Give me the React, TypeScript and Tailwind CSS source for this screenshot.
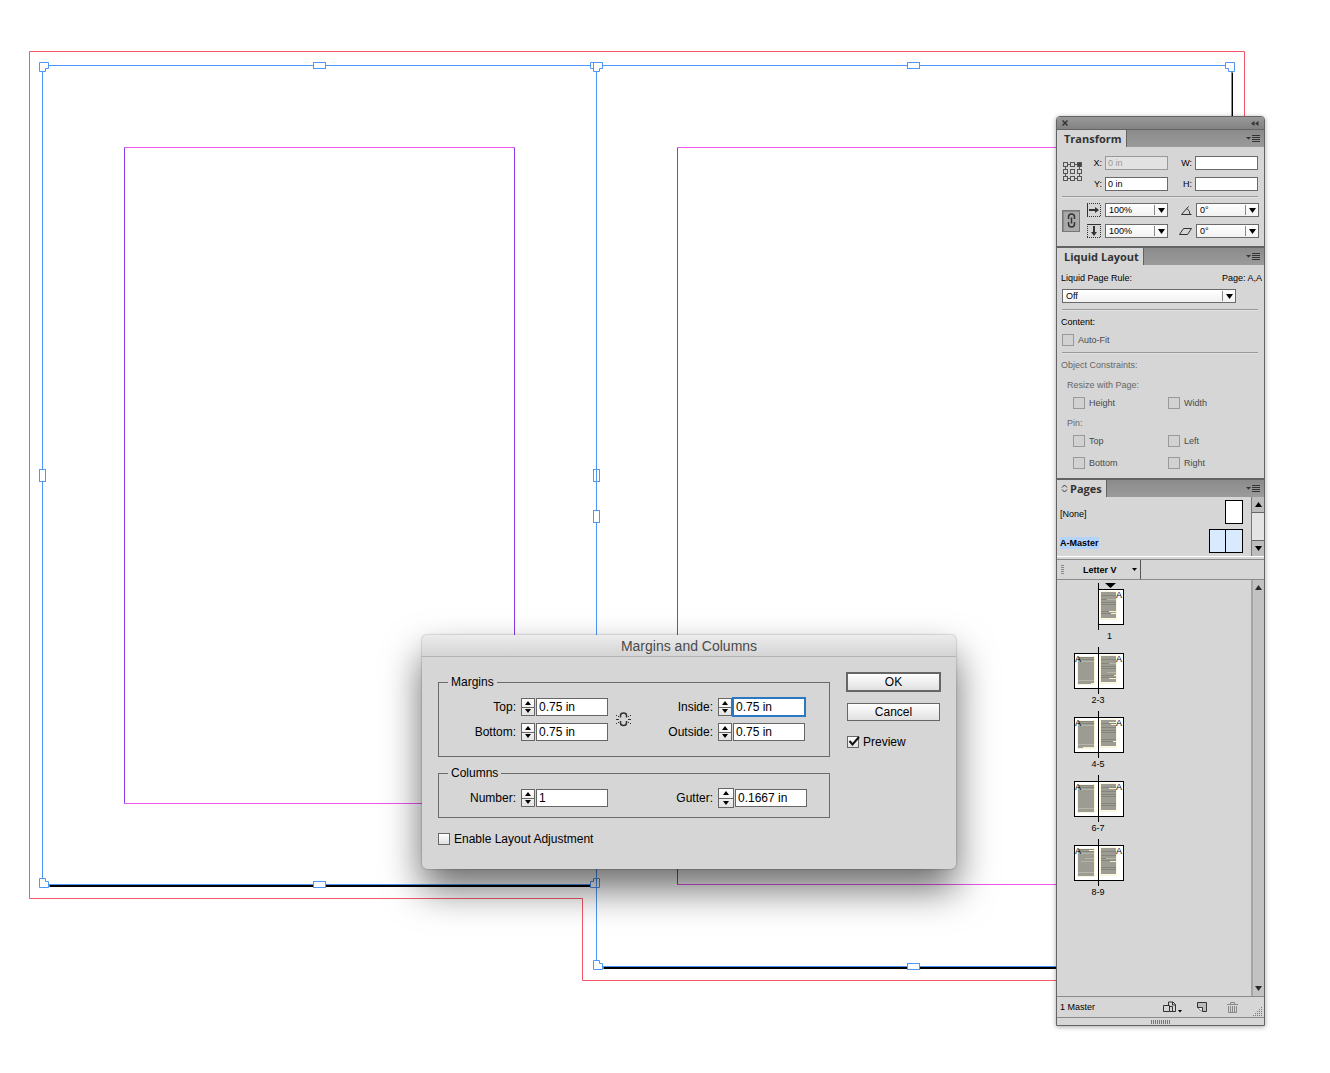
import { useState } from "react";
import type { ReactNode } from "react";

type Handle = { x: number; y: number };

const wideHandles: Handle[] = [
  { x: 313, y: 62 },
  { x: 907, y: 62 },
  { x: 313, y: 881 },
  { x: 907, y: 963 },
];

const tallHandles: Handle[] = [
  { x: 39, y: 469 },
  { x: 593, y: 469 },
  { x: 593, y: 510 },
];

// Master spread with bleed, page edges, margins and handles
function Spread() {
  return (
    <svg className="absolute left-0 top-0" width="1330" height="1073" fill="none" aria-hidden="true">
      <g transform="translate(.5 .5)">
        <path d="M29 51H1244V980H582V898H29Z" stroke="#f4596a" />

        {/* Page shadow */}
        <path d="M49 885H590M49 886H590M603 967H1232M603 968H1232M1232 72V968" stroke="#000" />

        {/* Page edges */}
        <path d="M42 65H1231V966H596M42 65V884H596M596 65V966" stroke="#4d97f8" />

        {/* Margins */}
        <path d="M124 147H514M124 803H514M677 147H1150M677 884H1150" stroke="#ec55ee" />
        <path d="M124 147V803M514 147V803M677 147V884" stroke="#8a38ea" />

        {/* Handles */}
        <g stroke="#4d97f8" fill="#fff">
          {wideHandles.map((h) => (
            <rect key={`${h.x}-${h.y}`} x={h.x} y={h.y} width="12" height="6" />
          ))}
          {tallHandles.map((h) => (
            <rect key={`${h.x}-${h.y}`} x={h.x} y={h.y} width="6" height="12" />
          ))}
          <path d="M596 469V481" />
          <path d="M39 62H48V68H45V71H39Z" />
          <path d="M590 62H602V68H590Z" />
          <path d="M593 62H602V68H599V71H593Z" />
          <path d="M1225 62H1234V71H1228V68H1225Z" />
          <path d="M39 878H45V881H48V887H39Z" />
          <path d="M593 878H599V887H590V881H593Z" />
          <path d="M596 878V887" />
          <path d="M593 960H599V963H602V969H593Z" />
        </g>
      </g>
    </svg>
  );
}

/* ---------- Dialog ---------- */

type FieldProps = {
  id: string;
  label: string;
  initial: string;
  labelClass: string;
  focused?: boolean;
  large?: boolean;
};

function StepperField({ id, label, initial, labelClass, focused, large }: FieldProps) {
  const [value, setValue] = useState(initial);

  const step = (dir: number) => {
    const next = Math.max(0, parseFloat(value) + dir * (initial.includes("in") ? 0.0625 : 1));
    setValue(initial.includes("in") ? `${next} in` : `${next}`);
  };

  return (
    <div className="flex items-center">
      <label htmlFor={id} className={`text-right ${labelClass}`}>
        {label}
      </label>
      <div
        className={`ml-[5px] mr-px flex flex-col border border-[#666] bg-linear-to-b from-white to-[#e4e4e4] ${
          large ? "h-5 w-4" : "h-[18px] w-[14px]"
        }`}
      >
        <button
          type="button"
          aria-label={`Increase ${label}`}
          onClick={() => step(1)}
          className="flex flex-1 items-center justify-center border-b border-[#666]"
        >
          <svg width="6" height="4"><path d="M0 4L3 0L6 4Z" /></svg>
        </button>
        <button
          type="button"
          aria-label={`Decrease ${label}`}
          onClick={() => step(-1)}
          className="flex flex-1 items-center justify-center"
        >
          <svg width="6" height="4"><path d="M0 0H6L3 4Z" /></svg>
        </button>
      </div>
      <input
        id={id}
        value={value}
        onChange={(e) => setValue(e.target.value)}
        className={`h-[18px] w-[72px] border bg-white px-[2px] outline-none ${
          focused ? "border-[#2a78c4] ring-1 ring-[#2a78c4]" : "border-[#666]"
        }`}
      />
    </div>
  );
}

function BrokenLink() {
  return (
    <svg width="15" height="15" fill="none" stroke="#333">
      <path d="M4.500 5.500V3.500Q4.500 1 7.500 1T10.500 3.500V5.500M4.500 9V11Q4.500 13.500 7.500 13.500T10.500 11V9" strokeWidth="1.500" />
      <path d="M0 7.500H3M12 7.500H15M0 3.500H1M2 4.500H3M14 3.500H15M12 4.500H13M0 11.500H1M2 10.500H3M14 11.500H15M12 10.500H13" />
    </svg>
  );
}

function MarginsDialog() {
  const [preview, setPreview] = useState(true);

  return (
    <section
      role="dialog"
      aria-labelledby="dialog-title"
      className="absolute left-[422px] top-[635px] w-[534px] rounded-[5px] bg-[#d6d6d6] text-[12px] leading-4 text-black shadow-[0_20px_38px_rgba(0,0,0,0.58),0_0_2px_rgba(0,0,0,0.4)]"
    >
      <h1
        id="dialog-title"
        className="h-[22px] rounded-t-[5px] border-b border-[#b2b2b2] bg-linear-to-b from-[#ececec] to-[#d4d4d4] text-center text-[14px] leading-[22px] text-[#4a4a4a]"
      >
        Margins and Columns
      </h1>

      <form className="flex gap-4 pl-4" onSubmit={(e) => e.preventDefault()}>
        <div className="w-[392px] pb-[22px] pt-[18px]">
          <fieldset className="border border-[#6a6a6a] pb-[15px] pt-[8px]">
            <legend className="ml-[9px] px-[3px] leading-[15px]">Margins</legend>
            <div className="flex items-center">
              <div className="flex flex-col gap-[7px]">
                <StepperField id="top" label="Top:" initial="0.75 in" labelClass="w-[77px]" />
                <StepperField id="bottom" label="Bottom:" initial="0.75 in" labelClass="w-[77px]" />
              </div>
              <button type="button" aria-label="Make all settings the same" className="ml-2 w-[15px]">
                <BrokenLink />
              </button>
              <div className="flex flex-col gap-[7px]">
                <StepperField id="inside" label="Inside:" initial="0.75 in" labelClass="w-[82px]" focused />
                <StepperField id="outside" label="Outside:" initial="0.75 in" labelClass="w-[82px]" />
              </div>
            </div>
          </fieldset>

          <fieldset className="mt-[9px] border border-[#6a6a6a] pb-[9px] pt-[7px]">
            <legend className="ml-[9px] px-[3px] leading-[15px]">Columns</legend>
            <div className="flex items-center">
              <StepperField id="number" label="Number:" initial="1" labelClass="w-[77px]" />
              <StepperField id="gutter" label="Gutter:" initial="0.1667 in" labelClass="w-[105px]" large />
            </div>
          </fieldset>

          <label className="mt-[13px] flex items-center gap-1">
            <input
              type="checkbox"
              className="size-3 appearance-none border border-[#666] bg-linear-to-b from-white to-[#e0e0e0] checked:bg-[#444]"
            />
            Enable Layout Adjustment
          </label>
        </div>

        <div className="flex flex-col items-start pt-[15px]">
          <button type="submit" className="h-5 w-[95px] border-2 border-[#666] bg-linear-to-b from-white to-[#e0e0e0]">
            OK
          </button>
          <button
            type="button"
            className="ml-px mt-[11px] h-[18px] w-[93px] border border-[#666] bg-linear-to-b from-white to-[#e0e0e0]"
          >
            Cancel
          </button>
          <label className="ml-px mt-[13px] flex items-center gap-1">
            <span className="relative flex">
              <input
                type="checkbox"
                checked={preview}
                onChange={(e) => setPreview(e.target.checked)}
                className="size-3 appearance-none border border-[#666] bg-linear-to-b from-white to-[#e0e0e0]"
              />
              {preview && (
                <svg className="pointer-events-none absolute left-0 top-0" width="13" height="12" fill="none" stroke="#111" strokeWidth="2">
                  <path d="M2.500 5L5.500 8.500L12 1" />
                </svg>
              )}
            </span>
            Preview
          </label>
        </div>
      </form>
    </section>
  );
}

/* ---------- Panels ---------- */

function TabBar({ title, icon }: { title: string; icon?: ReactNode }) {
  return (
    <div className="flex h-[18px] items-stretch justify-between border-t border-[#636363] bg-linear-to-b from-[#8b8b8b] to-[#9b9b9b]">
      <h2 className="flex items-center gap-[2px] border-r border-[#636363] bg-[#d6d6d6] pl-[7px] pr-1 font-['Open_Sans',sans-serif] text-[11px] font-bold leading-4 text-[#333] has-[svg]:pl-1">
        {icon}
        {title}
      </h2>
      <button type="button" aria-label={`${title} panel menu`} className="flex items-center pr-1">
        <svg width="14" height="9" fill="#333">
          <path d="M0 3H5L2.500 5.500ZM6 1H14V2H6ZM6 3H14V4H6ZM6 5H14V6H6ZM6 7H14V8H6Z" />
        </svg>
      </button>
    </div>
  );
}

function Divider() {
  return <hr className="ml-[5px] mr-[6px] h-[2px] border-b border-t border-b-[#e2e2e2] border-t-[#999]" />;
}

type TextFieldProps = { id: string; label: string; value?: string; disabled?: boolean; labelClass: string };

function TextField({ id, label, value = "", disabled, labelClass }: TextFieldProps) {
  return (
    <div className="flex items-center">
      <label htmlFor={id} className={`text-right ${labelClass}`}>{label}</label>
      <input
        id={id}
        defaultValue={value}
        disabled={disabled}
        className="h-[14px] w-[63px] border border-[#6a6a6a] bg-white px-[2px] outline-none disabled:border-[#999] disabled:bg-[#e2e2e2] disabled:text-[#999]"
      />
    </div>
  );
}

function DropDown({ label, options, className }: { label: string; options: string[]; className: string }) {
  return (
    <div className={`relative flex ${className}`}>
      <select
        aria-label={label}
        className="h-[14px] w-full appearance-none border border-[#6a6a6a] bg-linear-to-b from-white to-[#f2f2f2] pl-[3px] leading-3 outline-none"
      >
        {options.map((o) => (
          <option key={o}>{o}</option>
        ))}
      </select>
      <svg className="pointer-events-none absolute right-0 top-0" width="14" height="14">
        <path d="M.5 2V12" stroke="#888" />
        <path d="M4 5H11L7.500 10Z" />
      </svg>
    </div>
  );
}

const scaleOptions = ["100%", "50%", "200%"];
const angleOptions = ["0°", "90°", "180°"];

function TransformPanel() {
  return (
    <section>
      <TabBar title="Transform" />
      <div className="pb-[8px] pt-[9px]">
        <div className="flex items-start pl-[6px]">
          <svg className="mt-[6px]" width="19" height="20" fill="#d6d6d6" stroke="#555" aria-label="Reference point">
            <path d="M2.500 2.500H16.500M2.500 16.500H16.500" />
            {[0, 7, 14].map((y) =>
              [0, 7, 14].map((x) => (
                <rect
                  key={`${x}-${y}`}
                  x={x + 0.5}
                  y={y + 0.5}
                  width="4"
                  height="4"
                  fill={x === 14 && y === 0 ? "#444" : "#d6d6d6"}
                />
              )),
            )}
            <path d="M2.500 5V7M2.500 12V14M16.500 5V7M16.500 12V14" />
          </svg>
          <div className="flex flex-col gap-[7px]">
            <TextField id="x" label="X:" value="0 in" disabled labelClass="w-[23px] pr-[3px]" />
            <TextField id="y" label="Y:" value="0 in" labelClass="w-[23px] pr-[3px]" />
          </div>
          <div className="ml-auto flex flex-col gap-[7px] pr-[6px]">
            <TextField id="w" label="W:" labelClass="w-6 pr-[3px]" />
            <TextField id="h" label="H:" labelClass="w-6 pr-[3px]" />
          </div>
        </div>

        <div className="mb-[5px] mt-[5px]"><Divider /></div>

        <div className="flex items-center pl-[5px] pr-[5px]">
          <button
            type="button"
            aria-label="Constrain proportions for scaling"
            className="flex h-[22px] w-[18px] items-center justify-center border border-[#777] bg-[#aaa] shadow-[inset_1px_1px_1px_#888]"
          >
            <svg width="9" height="15" fill="none" stroke="#333" strokeWidth="1.500">
              <path d="M1.500 6V4Q1.500 1 4.500 1T7.500 4V6M1.500 9V11Q1.500 14 4.500 14T7.500 11V9M4.500 4.500V10.500" />
            </svg>
          </button>
          <div className="ml-[7px] flex flex-col gap-[7px]">
            <div className="flex items-center gap-[4px]">
              <svg width="14" height="14" fill="none" stroke="#333">
                <path d="M.5 0V14" />
                <path d="M2 .5H14M2 13.500H14M13.500 2V14" strokeDasharray="1 1" />
                <path d="M2 7H9" strokeWidth="2" />
                <path d="M8 4L12 7L8 10Z" fill="#333" stroke="none" />
              </svg>
              <DropDown label="Scale X" options={scaleOptions} className="w-[63px]" />
            </div>
            <div className="flex items-center gap-[4px]">
              <svg width="14" height="14" fill="none" stroke="#333">
                <path d="M0 .5H14" />
                <path d="M.5 2V14M13.500 2V14M0 13.500H14" strokeDasharray="1 1" />
                <path d="M7 2V9" strokeWidth="2" />
                <path d="M4 8L7 12L10 8Z" fill="#333" stroke="none" />
              </svg>
              <DropDown label="Scale Y" options={scaleOptions} className="w-[63px]" />
            </div>
          </div>
          <div className="ml-auto flex flex-col gap-[7px]">
            <div className="flex items-center justify-end gap-[4px]">
              <svg width="11" height="9" fill="none" stroke="#333">
                <path d="M.5 8.500H10.500M.5 8.500L7.500 .5M6 2.500Q9 5 9 8.500" />
              </svg>
              <DropDown label="Rotation angle" options={angleOptions} className="w-[63px]" />
            </div>
            <div className="flex items-center justify-end gap-[4px]">
              <svg width="13" height="8" fill="none" stroke="#333">
                <path d="M.5 7.500L4.500 1.500H12.500L8.500 7.500Z" />
              </svg>
              <DropDown label="Shear angle" options={angleOptions} className="w-[63px]" />
            </div>
          </div>
        </div>
      </div>
    </section>
  );
}

function Check({ label }: { label: string }) {
  return (
    <label className="flex items-center gap-1 text-[#4a4a4a]">
      <input type="checkbox" disabled className="size-3 appearance-none border border-[#999] bg-[#d2d2d2]" />
      {label}
    </label>
  );
}

function LiquidLayoutPanel() {
  return (
    <section className="border-t border-[#636363]">
      <TabBar title="Liquid Layout" />
      <div className="pb-[9px] pt-[7px]">
        <div className="flex justify-between pl-1 pr-[2px]">
          <span>Liquid Page Rule:</span>
          <span>Page: A,A</span>
        </div>
        <div className="mb-[6px] mt-[5px] pl-[5px]">
          <DropDown label="Liquid Page Rule" options={["Off", "Scale", "Re-center", "Object-based"]} className="w-[174px]" />
        </div>
        <Divider />
        <p className="mt-[5px] pl-1">Content:</p>
        <div className="mb-[6px] mt-[6px] pl-[5px]">
          <Check label="Auto-Fit" />
        </div>
        <Divider />
        <p className="mt-[5px] pl-1 text-[#666]">Object Constraints:</p>
        <p className="mt-2 pl-[10px] text-[#666]">Resize with Page:</p>
        <div className="mt-[6px] grid grid-cols-[95px_1fr] pl-4">
          <Check label="Height" />
          <Check label="Width" />
        </div>
        <p className="mt-2 pl-[10px] text-[#666]">Pin:</p>
        <div className="mt-[6px] grid grid-cols-[95px_1fr] gap-y-[10px] pl-4">
          <Check label="Top" />
          <Check label="Left" />
          <Check label="Bottom" />
          <Check label="Right" />
        </div>
      </div>
    </section>
  );
}

type Stripe = [x: number, y: number, w: number, color: string];

const DARK = "#86867e";
const CREAM = "#f6f0d2";
const LIGHT = "#b5b5a8";

const leftBase: Stripe[] = [[4, 10, 16, DARK], [4, 12, 16, DARK], [4, 14, 16, LIGHT], [4, 33, 16, LIGHT]];
const rightBase: Stripe[] = [[27, 12, 15, DARK], [27, 16, 15, DARK], [27, 19, 15, DARK], [27, 21, 15, DARK], [27, 28, 15, DARK], [27, 30, 15, DARK]];

const spreads: { label: string; left: boolean; stripes: Stripe[] }[] = [
  { label: "1", left: false, stripes: [[33, 16, 9, LIGHT], [35, 28, 7, CREAM], [37, 30, 5, CREAM]] },
  { label: "2-3", left: true, stripes: [[35, 16, 7, LIGHT], [33, 25, 9, LIGHT], [40, 28, 2, CREAM], [35, 31, 7, CREAM], [17, 36, 3, CREAM]] },
  { label: "4-5", left: true, stripes: [[35, 11, 7, CREAM], [37, 13, 5, CREAM], [39, 30, 3, CREAM], [9, 36, 11, CREAM]] },
  { label: "6-7", left: true, stripes: [[35, 13, 7, CREAM]] },
  { label: "8-9", left: true, stripes: [[15, 11, 5, CREAM], [11, 19, 9, LIGHT], [7, 22, 13, LIGHT], [32, 19, 10, LIGHT], [36, 22, 6, CREAM]] },
];

function SpreadThumb({ label, left, stripes }: { label: string; left: boolean; stripes: Stripe[] }) {
  return (
    <li className="w-[50px]">
      <svg width="50" height="47" className="block">
        <rect x={left ? 0.5 : 24.5} y="6.500" width={left ? 49 : 25} height="35" fill="#fff" stroke="#000" />
        {left && (
          <>
            <rect x="3" y="9" width="18" height="29" fill="#fbf6e0" />
            <rect x="4" y="10" width="16" height="27" fill="#9c9c92" />
          </>
        )}
        <rect x="26" y="8" width="17" height="29" fill="#fbf6e0" />
        <rect x="27" y="9" width="15" height="26" fill="#9c9c92" />
        {[...(left ? leftBase : []), ...rightBase, ...stripes].map(([x, y, w, color]) => (
          <rect key={`${x}-${y}-${color}`} x={x} y={y} width={w} height="1" fill={color} />
        ))}
        <path d="M24.500 0V47" stroke="#000" />
        {!left && <path d="M31 0H42L36.500 5Z" />}
        {left && <text x="1" y="15" fontSize="9">A</text>}
        <text x="42" y="15" fontSize="9">A</text>
      </svg>
      <p className={left ? "pr-[2px] text-center" : "pl-[33px]"}>{label}</p>
    </li>
  );
}

function ScrollArrow({ up, label }: { up?: boolean; label: string }) {
  return (
    <button type="button" aria-label={label} className="flex h-[15px] items-center justify-center">
      <svg width="7" height="5">
        <path d={up ? "M0 5L3.500 0L7 5Z" : "M0 0H7L3.500 5Z"} />
      </svg>
    </button>
  );
}

function PagesPanel() {
  return (
    <section className="border-t border-[#636363]">
      <TabBar
        title="Pages"
        icon={
          <svg width="7" height="9" fill="none" stroke="#333">
            <path d="M1 3.500L3.500 1L6 3.500M1 5.500L3.500 8L6 5.500" />
          </svg>
        }
      />

      {/* Masters */}
      <div className="flex border-b border-white">
        <ul className="flex flex-1 flex-col gap-[5px] py-[3px] pl-[3px] pr-2">
          <li className="flex items-center justify-between">
            <span className="mt-1">[None]</span>
            <span className="h-6 w-[18px] border border-black bg-white" />
          </li>
          <li className="flex items-center justify-between font-bold">
            <span className="mt-1 bg-[#b3d3fb]">A-Master</span>
            <span className="flex h-6 w-[34px] border border-black bg-[#d9eaff]">
              <span className="w-4 border-r border-black" />
            </span>
          </li>
        </ul>
        <div className="flex w-[13px] flex-col justify-between border-l border-[#777] bg-[#bdbdbd]">
          <ScrollArrow up label="Scroll masters up" />
          <span className="flex-1 border-y border-[#666] bg-[#e4e4e4]" />
          <ScrollArrow label="Scroll masters down" />
        </div>
      </div>

      {/* Page size */}
      <div className="mt-[2px] flex h-[21px] items-stretch border-y border-[#8a8a8a]">
        <svg className="ml-1 self-center" width="3" height="9" fill="#888">
          <path d="M0 0H3V1H0ZM0 2H3V3H0ZM0 4H3V5H0ZM0 6H3V7H0ZM0 8H3V9H0Z" />
        </svg>
        <button type="button" className="flex w-[77px] items-center justify-between border-r border-[#555] pl-[19px] pr-[3px] font-bold">
          Letter V
          <svg width="5" height="3"><path d="M0 0H5L2.500 3Z" /></svg>
        </button>
      </div>

      {/* Document pages */}
      <div className="flex h-[416px]">
        <ul className="flex flex-1 flex-col gap-[5px] overflow-hidden pl-[17px] pt-[3px]">
          {spreads.map((s) => (
            <SpreadThumb key={s.label} {...s} />
          ))}
        </ul>
        <div className="flex w-[13px] flex-col justify-between border-l-2 border-[#999] bg-[#bebebe] opacity-80">
          <ScrollArrow up label="Scroll pages up" />
          <ScrollArrow label="Scroll pages down" />
        </div>
      </div>

      <footer className="flex h-[22px] items-center border-y border-[#8a8a8a] pl-[3px]">
        <span className="mr-auto">1 Master</span>
        <button type="button" aria-label="Edit page size">
          <svg width="19" height="13" fill="none" stroke="#333">
            <path d="M.5 4.500H6.500V10.500H.5ZM6.500 10.500H12.500V3.500L10 1H5.500V4.500M9.500 1V4H12.500M6.500 5.500H9.500V10.500" />
            <path d="M15 9H19L17 11.500Z" fill="#000" stroke="none" />
          </svg>
        </button>
        <button type="button" aria-label="Create new page" className="ml-[15px]">
          <svg width="11" height="11" fill="none" stroke="#333">
            <path d="M.5 5.500V.5H9.500V9.500H5.500Z" fill="#bbb" />
            <path d="M.5 5.500H5.500V9.500" fill="#eee" />
          </svg>
        </button>
        <button type="button" aria-label="Delete selected pages" className="ml-[19px]">
          <svg width="11" height="11" fill="none" stroke="#888">
            <path d="M0 2.500H11M3.500 2V.5H7.500V2M1.500 4V10.500H9.500V4M3.500 4V10M5.500 4V10M7.500 4V10" />
          </svg>
        </button>
        <svg className="ml-[15px] mr-[2px] mt-2" width="9" height="9" fill="none" stroke="#777">
          <path d="M8 .5H9M6 2.500H9M4 4.500H9M2 6.500H9M0 8.500H9" strokeDasharray="1 1" />
        </svg>
      </footer>
      <div className="flex h-[7px] items-center justify-center">
        <svg width="19" height="4" fill="none" stroke="#777">
          <path d="M0 2H19" strokeWidth="4" strokeDasharray="1 1" />
        </svg>
      </div>
    </section>
  );
}

function PanelDock() {
  return (
    <aside className="absolute right-[65px] top-[116px] w-[209px] rounded-t-[4px] border border-[#636363] bg-[#d6d6d6] text-[9px] leading-3 text-black shadow-[0_1px_5px_rgba(0,0,0,0.35)]">
      <header className="flex h-3 items-center justify-between rounded-t-[3px] bg-linear-to-b from-[#999] to-[#828282] px-[5px]">
        <button type="button" aria-label="Close panels">
          <svg width="6" height="6" stroke="#333" strokeWidth="1.500"><path d="M.5 .5L5.500 5.500M5.500 .5L.5 5.500" /></svg>
        </button>
        <button type="button" aria-label="Collapse panels">
          <svg width="8" height="5" fill="#333"><path d="M3.500 0V5L0 2.500ZM7.500 0V5L4 2.500Z" /></svg>
        </button>
      </header>
      <TransformPanel />
      <LiquidLayoutPanel />
      <PagesPanel />
    </aside>
  );
}

export default function App() {
  return (
    <main className="relative min-h-screen w-full overflow-hidden bg-white font-['Liberation_Sans',Arial,sans-serif]">
      <Spread />
      <MarginsDialog />
      <PanelDock />
    </main>
  );
}
